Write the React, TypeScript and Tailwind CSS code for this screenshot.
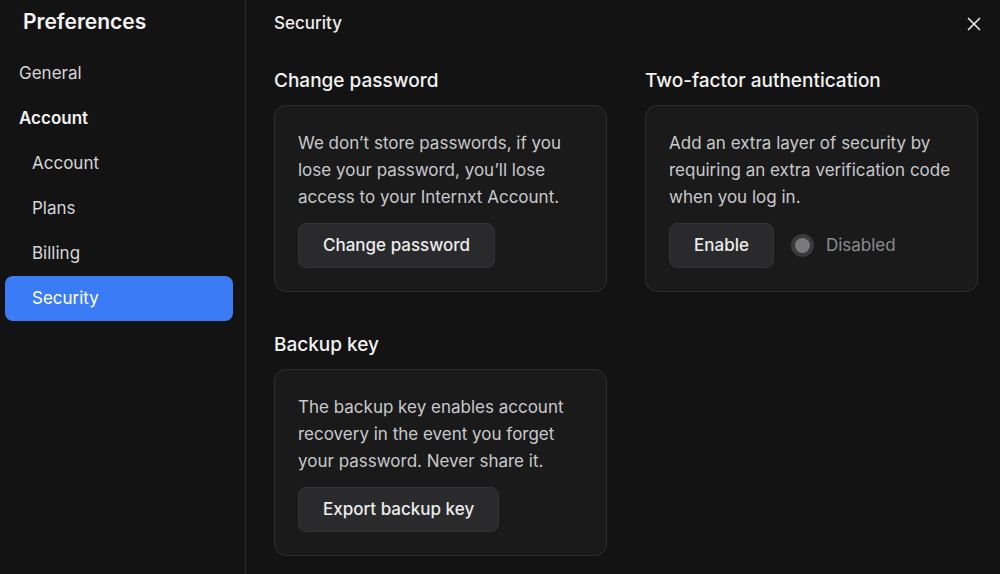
import { X } from "lucide-react";

const font = { fontFamily: "Inter, 'Noto Sans', sans-serif" };

const navItems = [
  { label: "General", level: 0 },
  { label: "Account", level: 0, bold: true },
  { label: "Account", level: 1 },
  { label: "Plans", level: 1 },
  { label: "Billing", level: 1 },
  { label: "Security", level: 1, active: true },
];

const Card = ({ title, text, children }: { title: string; text: string[]; children: React.ReactNode }) => (
  <div className="flex flex-col">
    <h3 className="text-[19px] leading-6 font-medium text-[#f2f2f2] mb-3">{title}</h3>
    <div className="rounded-xl border border-[#2e2e30] bg-[#1a1a1b] px-[23px] pt-[24px] pb-[23px]">
      <p className="text-[17px] leading-[27px] text-[#c9c9cb]">
        {text.map((line, i) => (
          <span key={i} className="block whitespace-nowrap">{line}</span>
        ))}
      </p>
      <div className="mt-[12px] flex items-center">{children}</div>
    </div>
  </div>
);

const Button = ({ children }: { children: React.ReactNode }) => (
  <button className="h-[45px] px-6 rounded-lg bg-[#2a2a2c] border border-[#333336] text-[17px] font-medium text-[#ececec]">
    {children}
  </button>
);

export default function App() {
  return (
    <div style={font} className="flex h-[574px] w-[1000px] bg-[#131313] text-white overflow-hidden">
      {/* Sidebar */}
      <aside className="w-[246px] shrink-0 border-r border-[#2b2b2d] pl-[5px] pr-[12px]">
        <h1 className="pl-[18px] pt-[8px] text-[21px] leading-7 font-semibold text-[#f4f4f4]">Preferences</h1>
        <nav className="mt-[15px] flex flex-col">
          {navItems.map((item, i) => (
            <div
              key={i}
              className={`flex items-center h-[45px] rounded-lg text-[17px] ${
                item.level === 0 ? "pl-[14px]" : "pl-[27px]"
              } ${item.active ? "bg-[#3b7cf6] text-white" : "text-[#d6d6d8]"} ${
                item.bold ? "font-semibold text-[#f2f2f2]" : ""
              }`}
            >
              {item.label}
            </div>
          ))}
        </nav>
      </aside>

      {/* Content */}
      <main className="flex-1 pl-7 pr-[22px] pt-[12px]">
        <div className="flex items-center justify-between h-6">
          <h2 className="text-[17px] font-medium text-[#ededed]">Security</h2>
          <X className="w-[22px] h-[22px] text-[#e6e6e6] -mr-[7px]" strokeWidth={1.8} />
        </div>

        <div className="mt-[33px] grid grid-cols-[333px_333px] gap-x-[38px] gap-y-[41px] items-start">
          <Card
            title="Change password"
            text={["We don’t store passwords, if you", "lose your password, you’ll lose", "access to your Internxt Account."]}
          >
            <Button>Change password</Button>
          </Card>

          <Card
            title="Two-factor authentication"
            text={["Add an extra layer of security by", "requiring an extra verification code", "when you log in."]}
          >
            <Button>Enable</Button>
            <div className="ml-[17px] w-[23px] h-[23px] rounded-full bg-[#3a3a3c] flex items-center justify-center">
              <div className="w-[15px] h-[15px] rounded-full bg-[#7a7a7c]" />
            </div>
            <span className="ml-[12px] text-[17px] text-[#8c8c8e]">Disabled</span>
          </Card>

          <Card
            title="Backup key"
            text={["The backup key enables account", "recovery in the event you forget", "your password. Never share it."]}
          >
            <Button>Export backup key</Button>
          </Card>
        </div>
      </main>
    </div>
  );
}
